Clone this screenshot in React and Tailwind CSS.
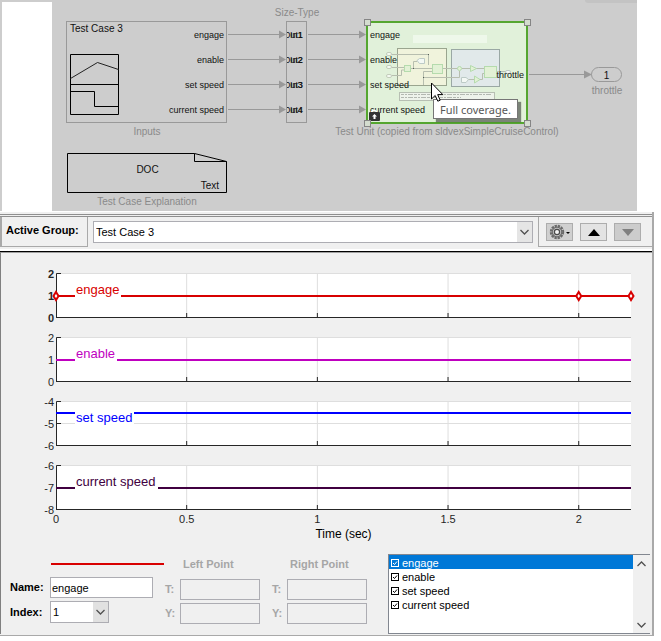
import cn from 'clsx'
import React, { useState } from 'react'

const T_MAX = 2.2
const X_TICKS = [0, 0.5, 1, 1.5, 2]
const PLOT_HEIGHT = 45

const SIGNALS = [
    {
        name: 'engage',
        color: '#d80000',
        ticks: [2, 1, 0],
        value: 1,
        points: [0, 2, 2.2],
        labelClass: 'text-[#d80000]',
        bold: true,
    },
    { name: 'enable', color: '#bf00bf', ticks: [2, 1, 0], value: 1, labelClass: 'text-[#bf00bf]' },
    { name: 'set speed', color: '#0000ff', ticks: [-4, -5, -6], value: -4.5, labelClass: 'text-[#0000ff]' },
    { name: 'current speed', color: '#400040', ticks: [-6, -7, -8], value: -7, labelClass: 'text-[#400040]' },
]

const PORT_ROWS = [35, 60, 85, 110]

const toX = (t) => `${(t / T_MAX) * 100}%`

const Chevron = ({ up = false }) => (
    <svg className="w-[9px] h-[6px]" viewBox="0 0 9 6" fill="none" stroke="#505050" strokeWidth="1.3">
        <path d={up ? 'M0.5 5 L4.5 1 L8.5 5' : 'M0.5 1 L4.5 5 L8.5 1'} />
    </svg>
)

/**
 * Signal wires between the blocks
 */
const Wires = () => (
    <svg className="absolute left-0 top-0 w-[637px] h-[211px]" stroke="#999999" fill="#999999">
        {PORT_ROWS.map((y) => (
            <g key={y}>
                <path d={`M228 ${y - 0.5} H281 M308 ${y - 0.5} H361`} />
                <path stroke="none" d={`M279 ${y - 4.5} L286 ${y - 0.5} L279 ${y + 3.5} Z`} />
                <path stroke="none" d={`M359 ${y - 4.5} L366 ${y - 0.5} L359 ${y + 3.5} Z`} />
            </g>
        ))}
        <path d="M529 74.5 H586" />
        <path stroke="none" d="M584 70.5 L592 74.5 L584 78.5 Z" />
    </svg>
)

const PortList = ({ names, className }) => (
    <ul className={cn('absolute flex flex-col gap-[13px] text-[9px] leading-[12px] text-[#111111]', className)}>
        {names.map((name) => (
            <li key={name}>{name}</li>
        ))}
    </ul>
)

const BlockName = ({ className, children }) => (
    <div
        className={cn(
            'absolute -translate-x-1/2 whitespace-nowrap text-[10px] leading-[12px] text-[#8a8a8a]',
            className,
        )}
    >
        {children}
    </div>
)

const InputsBlock = () => (
    <div className="absolute left-[66px] top-[21px] w-[161px] h-[102px] border border-[#999999]">
        <div className="absolute left-[3px] top-[1px] text-[10px] leading-[12px] text-[#111111]">Test Case 3</div>
        <svg className="absolute left-[3px] top-[32px] w-[50px] h-[62px]" fill="none" stroke="#000000">
            <path d="M0.5 0.5 H48.5 V60.5 H0.5 Z M0.5 30.5 H48.5 M0.5 37.5 H24.5 V52.5 H48.5" />
            <path stroke="#222222" d="M0.5 24.5 L27.5 8.5 L48.5 15.5" />
        </svg>
        <PortList className="right-[2px] top-[7px] text-right" names={SIGNALS.map((signal) => signal.name)} />
    </div>
)

// The block is narrower than its port names, so they run into each other
const SizeTypeBlock = () => (
    <div className="absolute left-[286px] top-[21px] w-[21px] h-[102px] overflow-hidden border border-[#999999]">
        <PortList className="left-[3px] top-[7px]" names={['In1', 'In2', 'In3', 'In4']} />
        <PortList className="right-[3px] top-[7px]" names={['Out1', 'Out2', 'Out3', 'Out4']} />
    </div>
)

const DocBlock = () => (
    <div className="absolute left-[67px] top-[153px] w-[161px] h-[40px] text-[#111111]">
        <svg className="absolute left-0 top-0 w-full h-full" fill="none" stroke="#000000">
            <path d="M127.5 0.5 H0.5 V39.5 H159.5 V8.5 H127.5 V0.5" />
            <path d="M127.5 0.5 L159.5 8.5" />
        </svg>
        <div className="absolute inset-x-0 top-[11px] text-center text-[10px] leading-[12px]">DOC</div>
        <div className="absolute right-[9px] top-[27px] text-[10px] leading-[12px]">Text</div>
    </div>
)

/**
 * Miniature of the subsystem content
 */
const UnitPreview = () => (
    <svg className="absolute left-0 top-0 w-[158px] h-[99px]" viewBox="368 23 158 99" fill="none">
        <rect x="413" y="35" width="74" height="8" fill="#eef8ea" />
        <rect x="397.5" y="48.5" width="49" height="37" fill="#f0f3dc" stroke="#9aa58f" />
        <rect x="451.5" y="49.5" width="48" height="37" fill="#e1e9ea" stroke="#9aa8a4" />
        <g stroke="#c3cdbb" fill="#f4faf1">
            <rect x="386.5" y="52.5" width="5" height="3" rx="1.5" />
            <rect x="386.5" y="65.5" width="5" height="3" rx="1.5" />
            <rect x="386.5" y="74.5" width="5" height="3" rx="1.5" />
        </g>
        <path
            stroke="#b7beaf"
            d="M392 54.5 H428.5 V65 M392 67.5 H404 M392 75.5 H401.5 V70 H404 M411 68.5 H433 M413.5 68 V61.5 H417 M442 68.5 H459 M423.5 85 V71.5 H433 M423.5 77.5 H459.5 V71 M462 68.5 H471 M476 68.5 H485 M468 79.5 H474 M479 79.5 H482.5 V73.5 H485 M496 71.5 H508"
        />
        <g stroke="#b5dbad" fill="#e2f1d5">
            <rect x="404.5" y="65.5" width="6" height="6" />
            <rect x="432.5" y="64.5" width="10" height="9" />
            <rect x="484.5" y="66.5" width="12" height="11" />
            <circle cx="459.5" cy="68.5" r="2" />
            <path d="M470.5 65.5 L476.5 68.5 L470.5 71.5 Z M474.5 76 L480 79.5 L474.5 83 Z" />
        </g>
        <g stroke="#bccac6" fill="#f3f8f4">
            <path d="M417 60.5 L419.5 58.5 H424.5 V63.5 H419.5 Z" />
            <path d="M461.5 77.5 H466 L468.5 79.5 L466 82.5 H461.5 Z" />
            <rect x="505.5" y="70.5" width="5" height="3" rx="1.5" />
        </g>
        <g fill="#556055">
            <rect x="428" y="54" width="1" height="1" />
            <rect x="413" y="68" width="1" height="1" />
            <rect x="423" y="77" width="1" height="1" />
        </g>
        <rect x="399.5" y="92.5" width="95" height="8" fill="#eef3eb" stroke="#b7bfb3" />
        <path stroke="#b3b8b1" strokeDasharray="3 1 2 1 5 1" d="M401 94.5 H491 M401 97.5 H461" />
    </svg>
)

const Handle = ({ className }) => (
    <span className={cn('absolute w-[7px] h-[7px] border border-[#858585] bg-[#d4dccf]', className)} />
)

const TestUnitBlock = () => (
    <div className="absolute left-[366px] top-[21px] w-[162px] h-[103px] border-2 border-[#55a630] bg-[#e1f1da]">
        <UnitPreview />
        <PortList className="left-[2px] top-[6px]" names={SIGNALS.map((signal) => signal.name)} />
        <PortList className="right-[2px] top-[46px]" names={['throttle']} />
        <svg className="absolute left-0 top-[86px] w-[13px] h-[13px]">
            <path d="M3.5 4 V3 Q6 -0.5 8.5 3 V4" fill="none" stroke="#ffffff" strokeWidth="1.5" />
            <rect x="1" y="3" width="11" height="9" rx="1" fill="#333333" />
            <path d="M6.5 5 L9 7.5 H7.5 V10 H5.5 V7.5 H4 Z" fill="#ffffff" />
        </svg>
        <Handle className="-left-[4px] -top-[4px]" />
        <Handle className="-right-[5px] -top-[4px]" />
        <Handle className="-left-[4px] -bottom-[5px]" />
        <Handle className="-right-[5px] -bottom-[5px]" />
    </div>
)

const ModelCanvas = () => (
    <div className="relative mr-6 h-[211px] overflow-hidden bg-[#cdcdcd]">
        <div className="absolute left-[2px] top-[2px] w-[50px] h-[209px] bg-white" />
        <div className="absolute right-0 top-0 w-[52px] h-[3px] rounded-bl bg-[#c3c3c3]" />
        <Wires />
        <InputsBlock />
        <BlockName className="left-[147px] top-[126px]">Inputs</BlockName>
        <DocBlock />
        <BlockName className="left-[147px] top-[196px]">Test Case Explanation</BlockName>
        <BlockName className="left-[297px] top-[7px]">Size-Type</BlockName>
        <SizeTypeBlock />
        <TestUnitBlock />
        <BlockName className="left-[447px] top-[126px]">Test Unit (copied from sldvexSimpleCruiseControl)</BlockName>
        <div className="absolute left-[591px] top-[67px] w-[31px] h-[15px] rounded-full border border-[#999999] text-center text-[10px] leading-[15px] text-[#111111]">
            1
        </div>
        <BlockName className="left-[607px] top-[85px]">throttle</BlockName>
        <div
            role="tooltip"
            className={cn(
                'absolute left-[433px] top-[99px] h-[20px] px-[6px] whitespace-nowrap',
                'border border-[#767676] bg-white shadow-[3px_3px_1px_rgba(0,0,0,0.45)]',
                "font-['Noto_Sans','Open_Sans',sans-serif] text-[11px] leading-[20px] text-[#575757]",
            )}
        >
            Full coverage.
        </div>
        <svg className="absolute left-[431px] top-[82px] w-[13px] h-[20px]" fill="#ffffff" stroke="#000000">
            <path d="M0.5 1 V17 L4.2 13.5 L6.8 19.2 L9.2 18.2 L6.7 12.6 H11.8 Z" />
        </svg>
    </div>
)

const ToolButton = ({ label, className, children, ...props }) => (
    <button
        type="button"
        aria-label={label}
        className={cn('flex items-center justify-center w-[27px] h-[18px] border border-[#adadad]', className)}
        {...props}
    >
        {children}
    </button>
)

const Toolbar = () => (
    <div className="flex h-[34px] border-b-2 border-white">
        <div className="w-[88px] h-[30px] pl-[4px] border-l-2 border-r border-b border-[#a9a9a9]">
            <label htmlFor="activeGroup" className="text-[11px] leading-[26px] font-bold whitespace-nowrap">
                Active Group:
            </label>
        </div>
        <div className="relative flex-1 h-[22px] mt-[4px] ml-[5px] mr-[5px] border border-[#adadb3] bg-white">
            <select
                id="activeGroup"
                className="block w-full h-[20px] pl-[2px] appearance-none bg-transparent text-[11px] leading-[20px] outline-none"
            >
                <option>Test Case 3</option>
            </select>
            <span className="absolute right-0 top-0 flex items-center justify-center w-[15px] h-[20px] bg-[#e5e5e5] pointer-events-none">
                <Chevron />
            </span>
        </div>
        <div className="flex gap-[7px] h-[30px] pl-[7px] pr-[11px] pt-[6px] border-l border-b border-[#a9a9a9]">
            <ToolButton label="Settings" className="bg-[#d0d0d0]">
                <svg className="w-[22px] h-[16px]" viewBox="0 0 22 16" fill="none">
                    <circle cx="8" cy="8" r="6.2" stroke="#6a6a6a" strokeWidth="2" strokeDasharray="2.4 0.85" />
                    <circle cx="8" cy="8" r="4.8" fill="#c4c4c4" stroke="#6a6a6a" strokeWidth="1.2" />
                    <circle cx="8" cy="8" r="2.6" fill="#f4f4f4" stroke="#4a4a4a" strokeWidth="1.2" />
                    <path d="M17 8 H21 L19 10 Z" fill="#000000" />
                </svg>
            </ToolButton>
            <ToolButton label="Move up" className="bg-[#e3e3e3]">
                <svg className="w-[12px] h-[7px]">
                    <path d="M6 0 L12 7 H0 Z" />
                </svg>
            </ToolButton>
            <ToolButton label="Move down" className="bg-[#cccccc]" disabled>
                <svg className="w-[12px] h-[7px]">
                    <path d="M0 0 H12 L6 7 Z" fill="#808080" />
                </svg>
            </ToolButton>
        </div>
    </div>
)

const SignalPlot = ({ signal, showTime }) => {
    const { ticks, value, color, points = [], bold } = signal
    const toY = (v) => Math.round(((ticks[0] - v) / 2) * (PLOT_HEIGHT - 1)) + 0.5

    return (
        <div className="relative h-[45px] bg-white">
            <svg className="block w-full h-full overflow-visible">
                {X_TICKS.slice(1).map((t) => (
                    <line key={t} x1={toX(t)} x2={toX(t)} y1="0" y2="45" stroke="#dedede" />
                ))}
                {ticks.slice(0, 2).map((v) => (
                    <line key={v} x1="0" x2="100%" y1={toY(v)} y2={toY(v)} stroke="#dedede" />
                ))}
                <path d="M5 0.5 H0.5 V44.5" fill="none" stroke="#262626" />
                <line x1="0" x2="5" y1={toY(ticks[1])} y2={toY(ticks[1])} stroke="#262626" />
                <line x1="0" x2="100%" y1="44.5" y2="44.5" stroke="#262626" />
                {X_TICKS.slice(1).map((t) => (
                    <line key={t} x1={toX(t)} x2={toX(t)} y1="40" y2="45" stroke="#262626" />
                ))}
                <g fill="#262626" className={cn('text-[11px]', { 'font-bold': bold })}>
                    {ticks.map((v) => (
                        <text key={v} x="-2" y={toY(v) + 4} textAnchor="end">
                            {v}
                        </text>
                    ))}
                    {showTime &&
                        X_TICKS.map((t) => (
                            <text key={t} x={toX(t)} y="58" textAnchor="middle">
                                {t}
                            </text>
                        ))}
                </g>
                <line x1="0" x2="100%" y1={toY(value) + 0.5} y2={toY(value) + 0.5} stroke={color} strokeWidth="2" />
                {points.map((t) => (
                    <svg key={t} x={toX(t)} y={toY(value) + 0.5} className="overflow-visible">
                        <path d="M0 -4 L2.5 0 L0 4 L-2.5 0 Z" fill="#ffffff" stroke={color} strokeWidth="2" />
                    </svg>
                ))}
            </svg>
            <span
                className={cn(
                    'absolute left-[19px] top-[8px] pl-px pr-[2px] bg-white text-[13px] leading-[17px]',
                    signal.labelClass,
                )}
            >
                {signal.name}
            </span>
        </div>
    )
}

const PointFields = ({ title, id }) => (
    <fieldset disabled className="w-[95px] text-[11px] font-bold text-[#a6a6a6]">
        <legend className="pl-[18px] pt-[3px] h-[25px] leading-[14px] whitespace-nowrap">{title}</legend>
        <div className="flex flex-col gap-[3px]">
            {['T', 'Y'].map((axis) => (
                <div key={axis} className="flex items-center">
                    <label htmlFor={id + axis} className="w-[15px]">
                        {axis}:
                    </label>
                    <input id={id + axis} className="w-[80px] h-[21px] px-1 border border-[#adadb3]" />
                </div>
            ))}
        </div>
    </fieldset>
)

const SignalList = ({ selected, onSelect }) => {
    const [visible, setVisible] = useState(SIGNALS.map((signal) => signal.name))

    const toggle = (name) => {
        setVisible(visible.includes(name) ? visible.filter((entry) => entry !== name) : [...visible, name])
        onSelect(name)
    }

    return (
        <div className="flex flex-1 h-[80px] ml-[21px] mr-[2px] border border-r-0 border-[#828790] bg-white">
            <ul className="flex-1 text-[11px] leading-[16px]">
                {SIGNALS.map(({ name }) => (
                    <li key={name} className={cn('h-[14px]', { 'bg-[#0078d7] text-white': name === selected })}>
                        <label className="flex gap-[3px] pl-[2px]">
                            <span className="relative flex pt-[4px]">
                                <input
                                    type="checkbox"
                                    checked={visible.includes(name)}
                                    onChange={() => toggle(name)}
                                    className="peer w-[8px] h-[8px] appearance-none border border-current"
                                />
                                <svg
                                    className="absolute left-0 top-[4px] w-[8px] h-[8px] pointer-events-none invisible peer-checked:visible"
                                    fill="none"
                                    stroke="currentColor"
                                >
                                    <path d="M2 4 L3.5 5.5 L6 2.5" />
                                </svg>
                            </span>
                            {name}
                        </label>
                    </li>
                ))}
            </ul>
            <div className="flex flex-col justify-between w-[17px] bg-[#f0f0f0]">
                <button type="button" aria-label="Scroll up" className="flex items-center justify-center h-[17px]">
                    <Chevron up />
                </button>
                <button type="button" aria-label="Scroll down" className="flex items-center justify-center h-[17px]">
                    <Chevron />
                </button>
            </div>
        </div>
    )
}

const SignalProperties = () => {
    const [name, setName] = useState('engage')
    const [selected, setSelected] = useState('engage')

    const select = (entry) => {
        setSelected(entry)
        setName(entry)
    }

    return (
        <div className="flex pl-[9px]">
            <div className="w-[155px] text-[11px]">
                <div className="h-[2px] mt-[9px] ml-[41px] mr-px bg-[#d80000]" />
                <div className="flex items-center mt-[12px]">
                    <label htmlFor="signalName" className="w-[40px] font-bold">
                        Name:
                    </label>
                    <input
                        id="signalName"
                        value={name}
                        onChange={(event) => setName(event.target.value)}
                        className="w-[103px] h-[21px] px-px border border-[#adadb3] bg-white outline-none"
                    />
                </div>
                <div className="flex items-center mt-[3px]">
                    <label htmlFor="signalIndex" className="w-[40px] font-bold">
                        Index:
                    </label>
                    <div className="relative w-[59px] h-[22px] border border-[#adadb3] bg-white">
                        <select
                            id="signalIndex"
                            className="block w-full h-[20px] pl-[2px] appearance-none bg-transparent leading-[20px] outline-none"
                        >
                            {SIGNALS.map((signal, index) => (
                                <option key={signal.name}>{index + 1}</option>
                            ))}
                        </select>
                        <span className="absolute right-0 top-0 flex items-center justify-center w-[15px] h-[20px] bg-[#e1e1e1] pointer-events-none">
                            <Chevron />
                        </span>
                    </div>
                </div>
            </div>
            <PointFields title="Left Point" id="left" />
            <div className="w-[12px]" />
            <PointFields title="Right Point" id="right" />
            <SignalList selected={selected} onSelect={select} />
        </div>
    )
}

const App = () => (
    <main className="min-h-screen overflow-hidden bg-white font-['Liberation_Sans',Arial,sans-serif] text-black">
        <ModelCanvas />
        <section className="mr-[7px] mt-px pb-px border-r-2 border-b border-[#a9a9a9] bg-[#f0f0f0]">
            <div className="h-[5px] pt-[2px]">
                <div className="h-[3px] border-y border-[#8f8f8f]" />
            </div>
            <Toolbar />
            <div className="border-t border-black" />
            <div className="border-t border-l border-t-[#a0a0a0] border-l-[#808080]">
                <div className="pt-[20px] pl-[55px] pr-[21px]">
                    <div className="flex flex-col gap-[19px]">
                        {SIGNALS.map((signal, index) => (
                            <SignalPlot key={signal.name} signal={signal} showTime={index === SIGNALS.length - 1} />
                        ))}
                    </div>
                    <div className="pt-[17px] pb-[13px] text-center text-[12px] leading-[14px]">Time (sec)</div>
                </div>
                <SignalProperties />
            </div>
        </section>
    </main>
)

export default App
